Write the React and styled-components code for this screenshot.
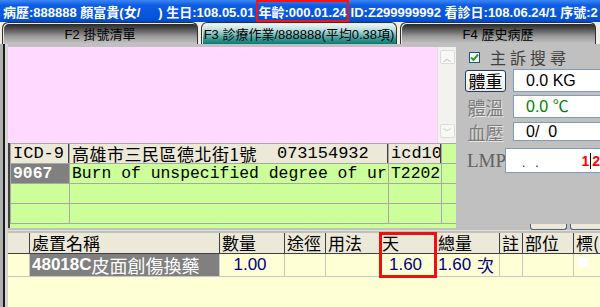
import styled, { createGlobalStyle } from "styled-components";

const Global = createGlobalStyle`
  html, body { margin: 0; padding: 0; }
  body {
    width: 600px;
    height: 307px;
    overflow: hidden;
    background: #c0c0c0;
    font-family: "Liberation Sans", "Noto Sans CJK TC", sans-serif;
  }
`;

const CJK = `"Noto Sans CJK TC", sans-serif`;

export default function App() {
  return (
    <>
      <Global />
      <Page>
        <TopBar>
          <span>病歷:888888 顏富貴(女/&nbsp;&nbsp;&nbsp;&nbsp;&nbsp;) 生日:108.05.01</span>
          <Boxed>年齡:000.01.24</Boxed>
          <span>ID:Z299999992 看診日:108.06.24/1 序號:2 室</span>
        </TopBar>
        <TabRow>
          <Tab>F2 掛號清單</Tab>
          <Tab $active>F3 診療作業/888888(平均0.38項)</Tab>
          <Tab>F4 歷史病歷</Tab>
        </TabRow>
        <Body>
          <Main>
            <LeftCol>
              <ComplaintBox>
                <PinkArea />
                <ScrollBar>
                  <ScrollBtn>︿</ScrollBtn>
                  <ScrollBtn>﹀</ScrollBtn>
                </ScrollBar>
              </ComplaintBox>
              <DiagWrap>
                <DiagGrid>
                  <HeadCell>ICD-9</HeadCell>
                  <HeadCell>
                    <Addr>高雄市三民區德北街1號</Addr>
                    <Phone>073154932</Phone>
                  </HeadCell>
                  <HeadCell>icd10</HeadCell>
                  <DiagCell />
                  <DiagCell $selected>9067</DiagCell>
                  <DiagCell>Burn of unspecified degree of ur</DiagCell>
                  <DiagCell>T2202</DiagCell>
                  <DiagCell />
                  <DiagCell /><DiagCell /><DiagCell /><DiagCell />
                  <DiagCell /><DiagCell /><DiagCell /><DiagCell />
                </DiagGrid>
              </DiagWrap>
            </LeftCol>
            <SidePanel>
              <CheckRow>
                <CheckBox>
                  <svg width="9" height="9" viewBox="0 0 9 9">
                    <path d="M1 4.5 L3.5 7 L8 1.5" stroke="#21a121" strokeWidth="2" fill="none" />
                  </svg>
                </CheckBox>
                <PanelTitle>主訴搜尋</PanelTitle>
              </CheckRow>
              <FieldRow $h={23} $mt={4}>
                <WeightButton>體重</WeightButton>
                <Field>0.0 KG</Field>
              </FieldRow>
              <FieldRow $h={23} $mt={3}>
                <FieldLabel>體溫</FieldLabel>
                <Field $color="#008000">0.0 ℃</Field>
              </FieldRow>
              <FieldRow $h={19} $mt={4}>
                <FieldLabel>血壓</FieldLabel>
                <Field>0/&nbsp;&nbsp;0</Field>
              </FieldRow>
              <FieldRow $h={25} $mt={7}>
                <LmpLabel>LMP</LmpLabel>
                <LmpField>
                  <Dots>.&nbsp;&nbsp;&nbsp;.</Dots>
                  <RedNum>1</RedNum>
                  <Caret />
                  <RedNum>2</RedNum>
                </LmpField>
              </FieldRow>
              <ButtonPeek>
                <PeekBtn $w={35} />
                <PeekBtn $w={32} />
              </ButtonPeek>
            </SidePanel>
          </Main>
          <OrderTable>
            <OrderCol $w={22}>
              <OrderHead />
              <OrderCell />
            </OrderCol>
            <OrderCol $w={190}>
              <OrderHead>處置名稱</OrderHead>
              <OrderCell $selected>
                <b>48018C</b>
                <Cjk>皮面創傷換藥</Cjk>
              </OrderCell>
            </OrderCol>
            <OrderCol $w={65}>
              <OrderHead>數量</OrderHead>
              <OrderCell $center>1.00</OrderCell>
            </OrderCol>
            <OrderCol $w={41}>
              <OrderHead>途徑</OrderHead>
              <OrderCell />
            </OrderCol>
            <OrderCol $w={54}>
              <OrderHead>用法</OrderHead>
              <OrderCell />
            </OrderCol>
            <OrderCol $w={56} $highlight>
              <OrderHead>天</OrderHead>
              <OrderCell $center>1.60</OrderCell>
            </OrderCol>
            <OrderCol $w={64}>
              <OrderHead>總量</OrderHead>
              <OrderCell>
                1.60<Unit>次</Unit>
              </OrderCell>
            </OrderCol>
            <OrderCol $w={23}>
              <OrderHead>註</OrderHead>
              <OrderCell />
            </OrderCol>
            <OrderCol $w={51}>
              <OrderHead>部位</OrderHead>
              <OrderCell />
            </OrderCol>
            <OrderCol $w={40}>
              <OrderHead>標(</OrderHead>
              <OrderCell>
                <MiniBox />
              </OrderCell>
            </OrderCol>
          </OrderTable>
        </Body>
      </Page>
    </>
  );
}

const Page = styled.div`
  width: 600px;
  height: 307px;
  display: flex;
  flex-direction: column;
  overflow: hidden;
`;

const TopBar = styled.div`
  height: 22px;
  flex-shrink: 0;
  display: flex;
  align-items: center;
  gap: 2px;
  padding-left: 3px;
  white-space: nowrap;
  overflow: hidden;
  background: linear-gradient(#3c86f4, #0c5ce4 25%, #0654dc 80%, #0448c8);
  color: #ffffff;
  font-weight: 700;
  font-size: 13px;
  font-family: "Liberation Sans", ${CJK};
`;

const Boxed = styled.span`
  display: flex;
  align-items: center;
  height: 22px;
  padding: 0;
  box-sizing: border-box;
  border: 2px solid #ff1010;
`;

const TabRow = styled.div`
  height: 22px;
  flex-shrink: 0;
  display: flex;
  gap: 3px;
  padding: 0 2px;
  background: #f2efe0;
`;

const Tab = styled.div`
  width: 196px;
  height: 22px;
  box-sizing: border-box;
  display: flex;
  align-items: center;
  justify-content: center;
  border-radius: 6px 6px 0 0;
  border: 1px solid #303030;
  border-bottom: none;
  box-shadow: inset 1px 1px 0 #e8e8e8;
  font-size: 13px;
  color: #000000;
  font-family: "Liberation Sans", ${CJK};
  white-space: nowrap;
  background: ${(p) =>
    p.$active
      ? "linear-gradient(#f4fafa, #b8dcdc 35%, #3a9a96 75%, #087a74)"
      : "linear-gradient(#1e1e1e, #4a4a4a 25%, #9c9c9c 65%, #c4c4c4)"};
`;

const Body = styled.div`
  flex: 1;
  display: flex;
  flex-direction: column;
  padding-left: 8px;
  background: linear-gradient(
    to right,
    #b0b0b0 0 3px,
    #1a1a1a 3px 5px,
    #d6d6d6 5px 8px,
    #c0c0c0 8px
  );
`;

const Main = styled.div`
  height: 186px;
  flex-shrink: 0;
  display: flex;
  padding-top: 3px;
  box-sizing: border-box;
`;

const LeftCol = styled.div`
  width: 448px;
  flex-shrink: 0;
  display: flex;
  flex-direction: column;
`;

const ComplaintBox = styled.div`
  height: 96px;
  display: flex;
`;

const PinkArea = styled.div`
  flex: 1;
  background: #ffd9ff;
`;

const ScrollBar = styled.div`
  width: 19px;
  display: flex;
  flex-direction: column;
  justify-content: space-between;
  align-items: center;
  padding: 3px 0 5px;
  box-sizing: border-box;
  background: #f3f2ee;
  border-left: 1px solid #e0e0e0;
`;

const ScrollBtn = styled.div`
  width: 15px;
  height: 14px;
  border: 1px solid #dcdcdc;
  border-radius: 2px;
  box-sizing: border-box;
  display: flex;
  align-items: center;
  justify-content: center;
  font-size: 8px;
  color: #b0b0b0;
  background: #f8f8f6;
`;

const DiagWrap = styled.div`
  height: 85px;
  background: #ccff99;
  border-left: 2px solid #404040;
  box-sizing: border-box;
  overflow: hidden;
`;

const DiagGrid = styled.div`
  display: grid;
  grid-template-columns: 58px 318px 52px 15px;
  grid-auto-rows: 19px;
  gap: 1px;
  padding: 1px;
  background: #a8a8a8;
  width: max-content;
`;

const HeadCell = styled.div`
  display: flex;
  align-items: center;
  background: #ece9d8;
  border-right: 1px solid #404040;
  padding-left: 2px;
  font-family: "Liberation Mono", ${CJK};
  font-size: 17px;
  line-height: 17px;
  white-space: nowrap;
  overflow: hidden;
  color: #000000;
`;

const Addr = styled.span`
  font-family: ${CJK};
  font-size: 17px;
  line-height: 17px;
  letter-spacing: 0.5px;
`;

const Phone = styled.span`
  margin-left: 20px;
`;

const DiagCell = styled.div`
  background: ${(p) => (p.$selected ? "#808080" : "#ccff99")};
  color: ${(p) => (p.$selected ? "#ffffff" : "#000000")};
  font-weight: ${(p) => (p.$selected ? 700 : 400)};
  padding-left: 2px;
  font-family: "Liberation Mono", ${CJK};
  font-size: 16.4px;
  line-height: 19px;
  white-space: nowrap;
  overflow: hidden;
`;

const SidePanel = styled.div`
  flex: 1;
  min-width: 0;
  overflow: hidden;
  display: flex;
  flex-direction: column;
  padding: 2px 0 0 9px;
  background: #c0c0c0;
`;

const CheckRow = styled.div`
  display: flex;
  align-items: center;
  gap: 10px;
  padding-left: 4px;
  height: 16px;
`;

const CheckBox = styled.div`
  width: 11px;
  height: 11px;
  box-sizing: border-box;
  border: 1px solid #1c5180;
  background: #ffffff;
  display: flex;
  align-items: center;
  justify-content: center;
`;

const PanelTitle = styled.span`
  font-family: ${CJK};
  font-size: 16px;
  line-height: 16px;
  letter-spacing: 4px;
  color: #404040;
`;

const FieldRow = styled.div`
  display: flex;
  align-items: center;
  gap: 7px;
  height: ${(p) => p.$h}px;
  margin-top: ${(p) => p.$mt}px;
`;

const WeightButton = styled.div`
  width: 41px;
  height: 22px;
  box-sizing: border-box;
  border: 1px solid #1c3c6c;
  border-radius: 3px;
  background: linear-gradient(#ffffff, #ece9e0);
  display: flex;
  align-items: center;
  justify-content: center;
  font-family: ${CJK};
  font-size: 17px;
  line-height: 17px;
  color: #000000;
`;

const FieldLabel = styled.span`
  width: 41px;
  text-align: center;
  font-family: ${CJK};
  font-size: 18px;
  line-height: 18px;
  color: #7c7c7c;
  text-shadow: 1px 1px 0 #e8e8e8;
`;

const Field = styled.div`
  flex: 1;
  min-width: 0;
  height: 100%;
  box-sizing: border-box;
  border: 1px solid #7f9db9;
  border-right: none;
  background: #ffffff;
  display: flex;
  align-items: center;
  padding-left: 12px;
  font-family: "Liberation Sans", ${CJK};
  font-size: 16px;
  line-height: 16px;
  color: ${(p) => p.$color || "#000000"};
  white-space: nowrap;
  overflow: hidden;
`;

const LmpLabel = styled.span`
  width: 36px;
  font-family: "Liberation Serif", serif;
  font-size: 19px;
  line-height: 19px;
  color: #606060;
  padding-left: 2px;
`;

const LmpField = styled(Field)`
  padding-left: 16px;
  margin-left: -5px;
`;

const Dots = styled.span`
  flex: 1;
  font-size: 12px;
  color: #000000;
  padding-top: 4px;
`;

const RedNum = styled.span`
  color: #ff0000;
  font-weight: 700;
  font-size: 14px;
  font-family: "Liberation Sans", sans-serif;
`;

const Caret = styled.span`
  width: 1px;
  height: 16px;
  margin: 0 1px;
  background: #000000;
`;

const ButtonPeek = styled.div`
  margin-top: auto;
  display: flex;
  gap: 3px;
  padding-left: 65px;
  height: 6px;
`;

const PeekBtn = styled.div`
  width: ${(p) => p.$w}px;
  flex-shrink: 0;
  border: 1px solid #506080;
  border-top: none;
  border-radius: 0 0 3px 3px;
  background: #ece9d8;
`;

const OrderTable = styled.div`
  flex: 1;
  display: flex;
  padding-top: 2px;
  border-top: 1px solid #e0e0d0;
  background: linear-gradient(#c0c0c0 0 2px, #ffffd6 2px);
`;

const OrderCol = styled.div`
  width: ${(p) => p.$w}px;
  flex-shrink: 0;
  display: flex;
  flex-direction: column;
  align-self: flex-start;
  outline: ${(p) => (p.$highlight ? "3px solid #ee1010" : "none")};
  outline-offset: -2px;
  position: relative;
  z-index: ${(p) => (p.$highlight ? 1 : 0)};
`;

const OrderHead = styled.div`
  height: 21px;
  box-sizing: border-box;
  background: #ece9d8;
  border-right: 1px solid #404040;
  border-bottom: 1px solid #404040;
  padding-left: 2px;
  font-family: ${CJK};
  font-size: 17px;
  line-height: 20px;
  color: #000000;
  white-space: nowrap;
  overflow: hidden;
`;

const OrderCell = styled.div`
  height: 23px;
  box-sizing: border-box;
  border-right: 1px solid #c8c8c0;
  border-bottom: 1px solid #c8c8c0;
  display: flex;
  align-items: center;
  justify-content: ${(p) => (p.$center ? "center" : "flex-start")};
  padding: ${(p) => (p.$center ? "0 4px 0 0" : "0 0 0 2px")};
  font-family: "Liberation Sans", ${CJK};
  font-size: 17px;
  line-height: 18px;
  white-space: nowrap;
  overflow: hidden;
  background: ${(p) => (p.$selected ? "#808080" : "transparent")};
  color: ${(p) => (p.$selected ? "#ffffff" : "#000080")};
  b {
    font-weight: 700;
  }
`;

const Cjk = styled.span`
  font-family: ${CJK};
  font-size: 18px;
  line-height: 18px;
`;

const Unit = styled.span`
  margin-left: 6px;
  font-family: ${CJK};
  line-height: 18px;
`;

const MiniBox = styled.span`
  width: 10px;
  height: 10px;
  margin: -6px 0 0 2px;
  background: #ffffff;
`;
